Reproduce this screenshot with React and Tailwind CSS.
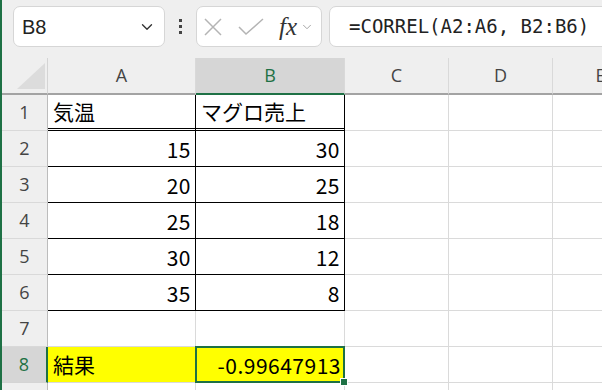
import { ChevronDown } from "lucide-react";

const font = { fontFamily: '"Noto Sans CJK JP", "Noto Sans", sans-serif' };

// table body rows: [row number, A, B]
const rows = [
  ["1", "気温", "マグロ売上"],
  ["2", "15", "30"],
  ["3", "20", "25"],
  ["4", "25", "18"],
  ["5", "30", "12"],
  ["6", "35", "8"],
];

function Corner() {
  return (
    <div className="relative h-[37px] border-r border-b-2 border-r-[#d4d4d4] border-b-[#a3a3a3] bg-[#efefef]">
      <svg className="absolute left-[15px] top-[5px]" width="28" height="26" viewBox="0 0 28 26">
        <polygon points="28,0 28,26 0,26" fill="#dcdcdc" />
      </svg>
    </div>
  );
}

function ColHead({ label, active }) {
  return (
    <div
      className={`flex h-[37px] items-center justify-center border-r border-b-2 border-r-[#d9d9d9] text-[18px] ${
        active ? "bg-[#d6d6d6] border-b-[#1e7145] text-[#1e7145]" : "bg-[#efefef] border-b-[#a3a3a3] text-[#444]"
      }`}
      style={{ fontFamily: '"Open Sans", "Liberation Sans", sans-serif' }}
    >
      {label}
    </div>
  );
}

function RowHead({ label, active }) {
  return (
    <div
      className={`flex h-[36px] items-center justify-center border-b text-[18px] ${
        active
          ? "bg-[#d6d6d6] border-r-2 border-r-[#1e7145] border-b-[#d4d4d4] text-[#1e7145]"
          : "bg-[#efefef] border-r border-r-[#bcbcbc] border-b-[#d9d9d9] text-[#444]"
      }`}
      style={{ fontFamily: '"Open Sans", "Liberation Sans", sans-serif' }}
    >
      {label}
    </div>
  );
}

function Blank() {
  return <div className="h-[36px] border-r border-b border-[#dadada] bg-white" />;
}

export default function App() {
  return (
    <div className="w-[602px] h-[390px] overflow-hidden border-l-2 border-[#1e7145] bg-[#efefef]">
      {/* formula bar */}
      <div className="flex h-[58px] items-start pl-[11px] pt-[6px]">
        <div className="flex h-[41px] w-[152px] shrink-0 items-center justify-between rounded-[7px] border border-[#d6d6d6] bg-white pl-[8px] pr-[8px]">
          <span className="text-[20px] text-[#222]" style={{ fontFamily: '"Liberation Sans", sans-serif' }}>B8</span>
          <ChevronDown size={18} strokeWidth={1.8} color="#333" />
        </div>
        <div className="flex h-[41px] w-[31px] shrink-0 flex-col items-center justify-center gap-[3px]">
          <span className="h-[3px] w-[3px] bg-[#444]" />
          <span className="h-[3px] w-[3px] bg-[#444]" />
          <span className="h-[3px] w-[3px] bg-[#444]" />
        </div>
        <div className="flex h-[41px] w-[126px] shrink-0 items-center rounded-[7px] border border-[#d6d6d6] bg-white pl-[6px]">
          <svg width="20" height="20" viewBox="0 0 20 20" className="shrink-0">
            <path d="M2 2 L18 18 M18 2 L2 18" stroke="#b4b4b4" strokeWidth="1.5" fill="none" />
          </svg>
          <svg width="26" height="18" viewBox="0 0 26 18" className="ml-[15px] shrink-0">
            <path d="M1 9 L8 16 L25 1" stroke="#b4b4b4" strokeWidth="1.5" fill="none" />
          </svg>
          <span
            className="ml-[15px] text-[25px] font-medium italic leading-none text-[#333]"
            style={{ fontFamily: '"Liberation Serif", serif' }}
          >
            fx
          </span>
          <ChevronDown size={14} strokeWidth={1.5} color="#999" className="ml-[3px]" />
        </div>
        <div className="ml-[7px] flex h-[41px] w-[300px] shrink-0 items-center rounded-l-[7px] border border-[#d6d6d6] bg-white pl-[19px]">
          <span className="text-[19px] text-[#222]" style={{ fontFamily: '"DejaVu Sans Mono", monospace' }}>
            =CORREL(A2:A6, B2:B6)
          </span>
        </div>
      </div>

      {/* sheet grid */}
      <div className="grid w-[660px] grid-cols-[46px_148px_149px_104px_104px_96px] bg-white" style={font}>
        <Corner />
        <ColHead label="A" />
        <ColHead label="B" active />
        <ColHead label="C" />
        <ColHead label="D" />
        <ColHead label="E" />

        {rows.map(([n, a, b], i) => {
          const first = i === 0;
          const cell = `flex h-[36px] items-center border-r border-black text-[21px] text-black ${
            first ? "border-b-[3px] border-double pl-[5px]" : "border-b justify-end pr-[4px] pt-[2px] tracking-[0.5px]"
          }`;
          return [
            <RowHead key={`h${n}`} label={n} />,
            <div key={`a${n}`} className={cell}>{a}</div>,
            <div key={`b${n}`} className={cell}>{b}</div>,
            <Blank key={`c${n}`} />,
            <Blank key={`d${n}`} />,
            <Blank key={`e${n}`} />,
          ];
        })}

        <RowHead label="7" />
        <Blank />
        <Blank />
        <Blank />
        <Blank />
        <Blank />

        <RowHead label="8" active />
        <div className="flex h-[36px] items-center border-b border-[#dadada] bg-[#ffff00] pl-[5px] text-[21px] text-black">
          結果
        </div>
        <div className="relative -ml-[1px] -mt-[1px] flex h-[37px] items-center justify-end border-2 border-[#1e7145] bg-[#ffff00] pr-[2px] pt-[2px] text-[21px] tracking-[0.5px] text-black">
          -0.99647913
          <span className="absolute -bottom-[5px] -right-[5px] h-[8px] w-[8px] border border-white bg-[#1e7145]" />
        </div>
        <Blank />
        <Blank />
        <Blank />

        <RowHead label="" />
        <Blank />
        <Blank />
        <Blank />
        <Blank />
        <Blank />
      </div>
    </div>
  );
}
